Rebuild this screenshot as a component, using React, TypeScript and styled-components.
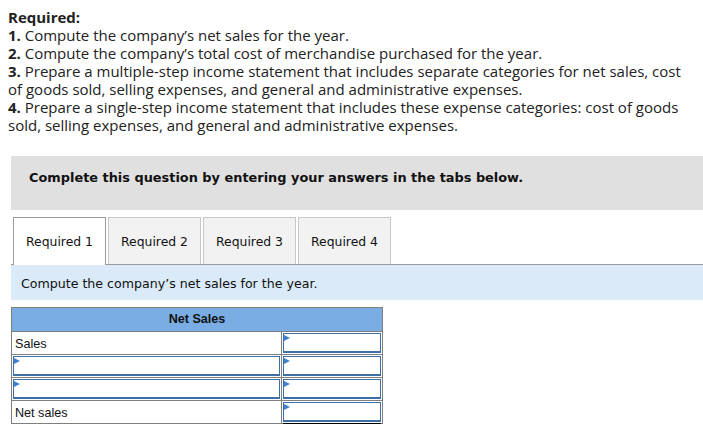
import React from 'react'
import styled, { createGlobalStyle } from 'styled-components'

const GlobalStyle = createGlobalStyle`
  body {
    margin: 0;
    background: #ffffff;
    color: #1a1a1a;
  }
`

const Page = styled.div`
  padding: 8px 0 0 0;
  width: 703px;
`

const Intro = styled.div`
  padding-left: 8px;
  font-family: 'Open Sans', 'Liberation Sans', sans-serif;
  font-size: 15px;
  line-height: 18px;
  color: #222;
  white-space: nowrap;
`

const Line = styled.div``

const Strong = styled.b`
  font-weight: 700;
`

const Banner = styled.div`
  margin: 22px 0 0 11px;
  height: 54px;
  box-sizing: border-box;
  background: #e0e0e0;
  padding: 14px 0 0 18px;
  font-family: 'DejaVu Sans', Verdana, sans-serif;
  font-size: 12.9px;
  line-height: 16px;
  font-weight: 700;
  color: #111;
`

const TabBar = styled.div`
  margin: 7px 0 0 11px;
  display: flex;
  align-items: flex-end;
  gap: 2px;
  border-bottom: 1px solid #9a9a9a;
  padding-left: 2px;
`

const Tab = styled.div<{ $active?: boolean }>`
  width: 93px;
  box-sizing: border-box;
  display: flex;
  align-items: center;
  justify-content: center;
  font-family: 'DejaVu Sans', Verdana, sans-serif;
  font-size: 12.4px;
  color: #111;
  background: ${(p) => (p.$active ? '#ffffff' : '#f2f2f2')};
  border: 1px solid ${(p) => (p.$active ? '#9a9a9a' : '#c8c8c8')};
  border-bottom: none;
  margin-bottom: ${(p) => (p.$active ? '-1px' : '0')};
  height: ${(p) => (p.$active ? '48px' : '47px')};
  padding-bottom: ${(p) => (p.$active ? '1px' : '0')};
`

const Prompt = styled.div`
  margin-left: 11px;
  height: 35px;
  background: #daeaf8;
  display: flex;
  align-items: center;
  padding: 2px 0 0 10px;
  box-sizing: border-box;
  font-family: 'DejaVu Sans', Verdana, sans-serif;
  font-size: 12.6px;
  color: #111;
`

const Table = styled.table`
  margin: 7px 0 0 11px;
  border-collapse: collapse;
  width: 372px;
  font-family: 'Liberation Sans', Arial, sans-serif;
  font-size: 12.6px;
  color: #111;
  border: 1px solid #7f7f7f;
`

const HeadCell = styled.th`
  background: #7aade3;
  height: 22px;
  padding: 0;
  font-weight: 700;
  text-align: center;
  border: 1px solid #7f7f7f;
  vertical-align: top;
  line-height: 23px;
`

const Cell = styled.td<{ $amount?: boolean }>`
  height: 20px;
  padding: 1px;
  border: 1px solid #7f7f7f;
  width: ${(p) => (p.$amount ? '98px' : 'auto')};
  vertical-align: top;
`

const LabelText = styled.div`
  padding: 3px 0 0 2px;
  line-height: 16px;
`

const InputBox = styled.div<{ $total?: boolean }>`
  position: relative;
  height: 17px;
  border: 1px solid #3d6fa8;
  border-bottom: 2px solid #3d6fa8;
  background: #fff;
  box-shadow: ${(p) => (p.$total ? '0 1px 0 #fff, 0 2px 0 #000, 0 3px 0 #fff, 0 4px 0 #000' : 'none')};
`

const Marker = styled.span`
  position: absolute;
  left: 0;
  top: 1px;
  width: 0;
  height: 0;
  border-top: 3.5px solid transparent;
  border-bottom: 3.5px solid transparent;
  border-left: 6px solid #3f7fd0;
`

const Entry = ({ total }: { total?: boolean }) => (
  <InputBox $total={total}>
    <Marker />
  </InputBox>
)

const App = () => {
  return (
    <Page>
      <GlobalStyle />
      <Intro>
        <Line>
          <Strong>Required:</Strong>
        </Line>
        <Line>
          <Strong>1.</Strong> Compute the company’s net sales for the year.
        </Line>
        <Line>
          <Strong>2.</Strong> Compute the company’s total cost of merchandise purchased for the year.
        </Line>
        <Line>
          <Strong>3.</Strong> Prepare a multiple-step income statement that includes separate categories for net sales, cost
        </Line>
        <Line>of goods sold, selling expenses, and general and administrative expenses.</Line>
        <Line>
          <Strong>4.</Strong> Prepare a single-step income statement that includes these expense categories: cost of goods
        </Line>
        <Line>sold, selling expenses, and general and administrative expenses.</Line>
      </Intro>

      <Banner>Complete this question by entering your answers in the tabs below.</Banner>

      <TabBar>
        <Tab $active>Required 1</Tab>
        <Tab>Required 2</Tab>
        <Tab>Required 3</Tab>
        <Tab>Required 4</Tab>
      </TabBar>

      <Prompt>Compute the company’s net sales for the year.</Prompt>

      <Table>
        <thead>
          <tr>
            <HeadCell colSpan={2}>Net Sales</HeadCell>
          </tr>
        </thead>
        <tbody>
          <tr>
            <Cell>
              <LabelText>Sales</LabelText>
            </Cell>
            <Cell $amount>
              <Entry />
            </Cell>
          </tr>
          <tr>
            <Cell>
              <Entry />
            </Cell>
            <Cell $amount>
              <Entry />
            </Cell>
          </tr>
          <tr>
            <Cell>
              <Entry />
            </Cell>
            <Cell $amount>
              <Entry />
            </Cell>
          </tr>
          <tr>
            <Cell>
              <LabelText>Net sales</LabelText>
            </Cell>
            <Cell $amount>
              <Entry total />
            </Cell>
          </tr>
        </tbody>
      </Table>
    </Page>
  )
}

export default App
